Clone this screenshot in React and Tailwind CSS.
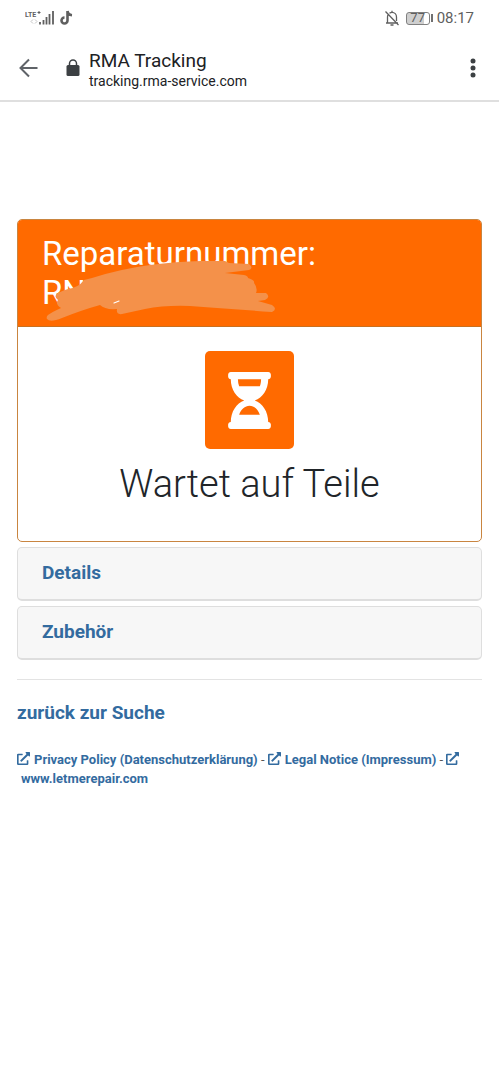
import { FaExternalLinkAlt, FaHourglassHalf } from "react-icons/fa";

const panels = ["Details", "Zubehör"];

const footerLinks = [
   { label: "Privacy Policy (Datenschutzerklärung)", href: "#privacy" },
   { label: "Legal Notice (Impressum)", href: "#legal" },
   { label: "www.letmerepair.com", href: "#letmerepair" },
];

function StatusBar() {
   return (
      <div className="flex h-9 items-center justify-between px-[25px] text-[#5f5f5f]">
         <div className="flex items-center gap-1">
            <svg width="31" height="18" viewBox="0 0 31 18" aria-hidden="true">
               <text x="0" y="8" fontSize="7" fontWeight="700" fontFamily="Roboto, sans-serif" fill="currentColor">
                  LTE
               </text>
               <path d="M12.500 3.500h3M14 2v3" stroke="currentColor" strokeWidth="1" />
               <path d="M8 10.500l-2 2 2 2M10 10.500l2 2-2 2" stroke="#c4c4c4" fill="none" />
               <path
                  d="M15 13v2.500M18.500 11v4.500M21.500 8v7.500M24.500 5v10.500M28 2v13.500"
                  stroke="currentColor"
                  strokeWidth="1.800"
               />
            </svg>
            <svg width="14" height="16" viewBox="0 0 14 16" aria-hidden="true">
               <path
                  d="M7.500 1v9.500a3 3 0 1 1-3-3M7.500 1c.3 2.500 2 4 4.500 4.200"
                  fill="none"
                  stroke="currentColor"
                  strokeWidth="2.600"
               />
            </svg>
         </div>
         <div className="flex items-center">
            <svg width="16" height="16" viewBox="0 0 16 16" fill="none" stroke="currentColor" strokeWidth="1.300" aria-hidden="true">
               <path d="M2 13h12M3.500 13V7c0-1 .3-1.900.8-2.600M5.500 3.200C6.200 2.700 7 2.400 8 2.400c2.600 0 4.500 2 4.500 4.600v4M8 .8v1.600M6.500 15h3M1.500 1.500l13 13.500" />
            </svg>
            <div className="ml-1.5 flex h-[13px] w-6 items-center justify-center rounded-[3px] border border-[#808080] bg-linear-to-r from-[#cfcfcf] from-77% to-white to-77% text-[13px]">
               77
            </div>
            <div className="ml-px h-2 w-[2px] bg-[#707070]" />
            <span className="ml-1 text-[15px]">08:17</span>
         </div>
      </div>
   );
}

function BrowserBar() {
   return (
      <header className="flex h-[66px] items-center border-b-2 border-[#dfdfdf] px-4 text-[#202124]">
         <button type="button" aria-label="Zurück" className="flex size-6 items-center justify-center text-[#5f6368]">
            <svg width="20" height="20" viewBox="0 0 20 20" fill="none" stroke="currentColor" strokeWidth="2" aria-hidden="true">
               <path d="M19.500 10H3M11 1.500L2.500 10l8.500 8.500" />
            </svg>
         </button>
         <svg className="ml-[26px]" width="14" height="18" viewBox="0 0 14 18" aria-hidden="true">
            <rect x="0.500" y="6" width="13" height="11" rx="1.500" fill="#3c4043" />
            <path d="M3.500 7V4.500a3.500 3.500 0 0 1 7 0V7" fill="none" stroke="#3c4043" strokeWidth="1.500" />
         </svg>
         <div className="ml-[9px] flex-1 pt-1">
            <div className="text-[19px] leading-[23px]">RMA Tracking</div>
            <div className="text-sm leading-[19px]">tracking.rma-service.com</div>
         </div>
         <button type="button" aria-label="Menü" className="flex h-6 w-5 items-center justify-center">
            <svg width="6" height="20" viewBox="0 0 6 20" fill="#3c4043" aria-hidden="true">
               <circle cx="3" cy="3" r="2.500" />
               <circle cx="3" cy="10" r="2.500" />
               <circle cx="3" cy="17" r="2.500" />
            </svg>
         </button>
      </header>
   );
}

function Scribble() {
   return (
      <svg
         className="absolute top-[41px] left-7"
         width="232"
         height="62"
         viewBox="46 261 232 62"
         aria-hidden="true"
      >
         <path
            d="M48 315Q52 312 61 308Q55 304 58 300Q53 296 58 293Q64 290 68 289Q78 288 84 280Q88 279 92 278Q120 269 150 265Q190 260 225 261L229 263L249 264Q254 268 249 270L225 273L244 275Q248 276 248 278Q255 280 254 283Q258 288 256 293L266 293Q271 297 265 300L258 301L272 305Q278 309 272 312Q230 309 190 306Q165 305 145 309L122 314Q116 315 117 309Q105 310 100 305Q82 310 62 318Q50 323 47 319Q46 317 48 315Z"
            fill="#f4914a"
         />
         <path d="M114 303l5-2" stroke="#fff" strokeWidth="1.200" strokeLinecap="round" />
      </svg>
   );
}

function App() {
   return (
      <div className="bg-white font-[Roboto,sans-serif]">
         <StatusBar />
         <BrowserBar />

         <main className="px-[17px] pt-[117px]">
            <section className="overflow-hidden rounded-[5px] border border-[#c98540]">
               <div className="relative border-b border-[#c9701f] bg-[#ff6a00] px-6 py-[14px] text-[33px] leading-[39px] text-white">
                  <h1>
                     Reparaturnummer:
                     <br />
                     RN
                  </h1>
                  <Scribble />
               </div>
               <div className="flex flex-col items-center px-6 pt-6 pb-[34px] text-[#212529]">
                  <div className="flex h-[98px] w-[89px] items-center justify-center rounded-[5px] bg-[#ff6a00] text-white">
                     <FaHourglassHalf className="h-[57px] w-[43px]" />
                  </div>
                  <h2 className="mt-3 text-[38px] leading-[46px] font-light">Wartet auf Teile</h2>
               </div>
            </section>

            <div className="mt-[5px] flex flex-col gap-[5px]">
               {panels.map((panel) => (
                  <button
                     key={panel}
                     type="button"
                     className="h-[54px] rounded-[5px] border border-b-2 border-[#dedede] bg-[#f7f7f7] px-6 text-left text-[19px] font-bold text-[#336b9f]"
                  >
                     {panel}
                  </button>
               ))}
            </div>

            <hr className="mt-[19px] border-[#e3e3e3]" />

            <a href="#suche" className="mt-[19px] block text-[19px] leading-7 font-bold text-[#336b9f]">
               zurück zur Suche
            </a>

            <footer className="mt-[23px] text-[13px] leading-[19px] text-[#555]">
               {footerLinks.map((link, index) => (
                  <span key={link.href}>
                     {index > 0 && " - "}
                     <a href={link.href} className="font-bold text-[#336b9f]">
                        <FaExternalLinkAlt className="inline size-[13px] align-[-1px]" />
                        <span className="ml-1">{link.label}</span>
                     </a>
                  </span>
               ))}
            </footer>
         </main>
      </div>
   );
}

export default App;
